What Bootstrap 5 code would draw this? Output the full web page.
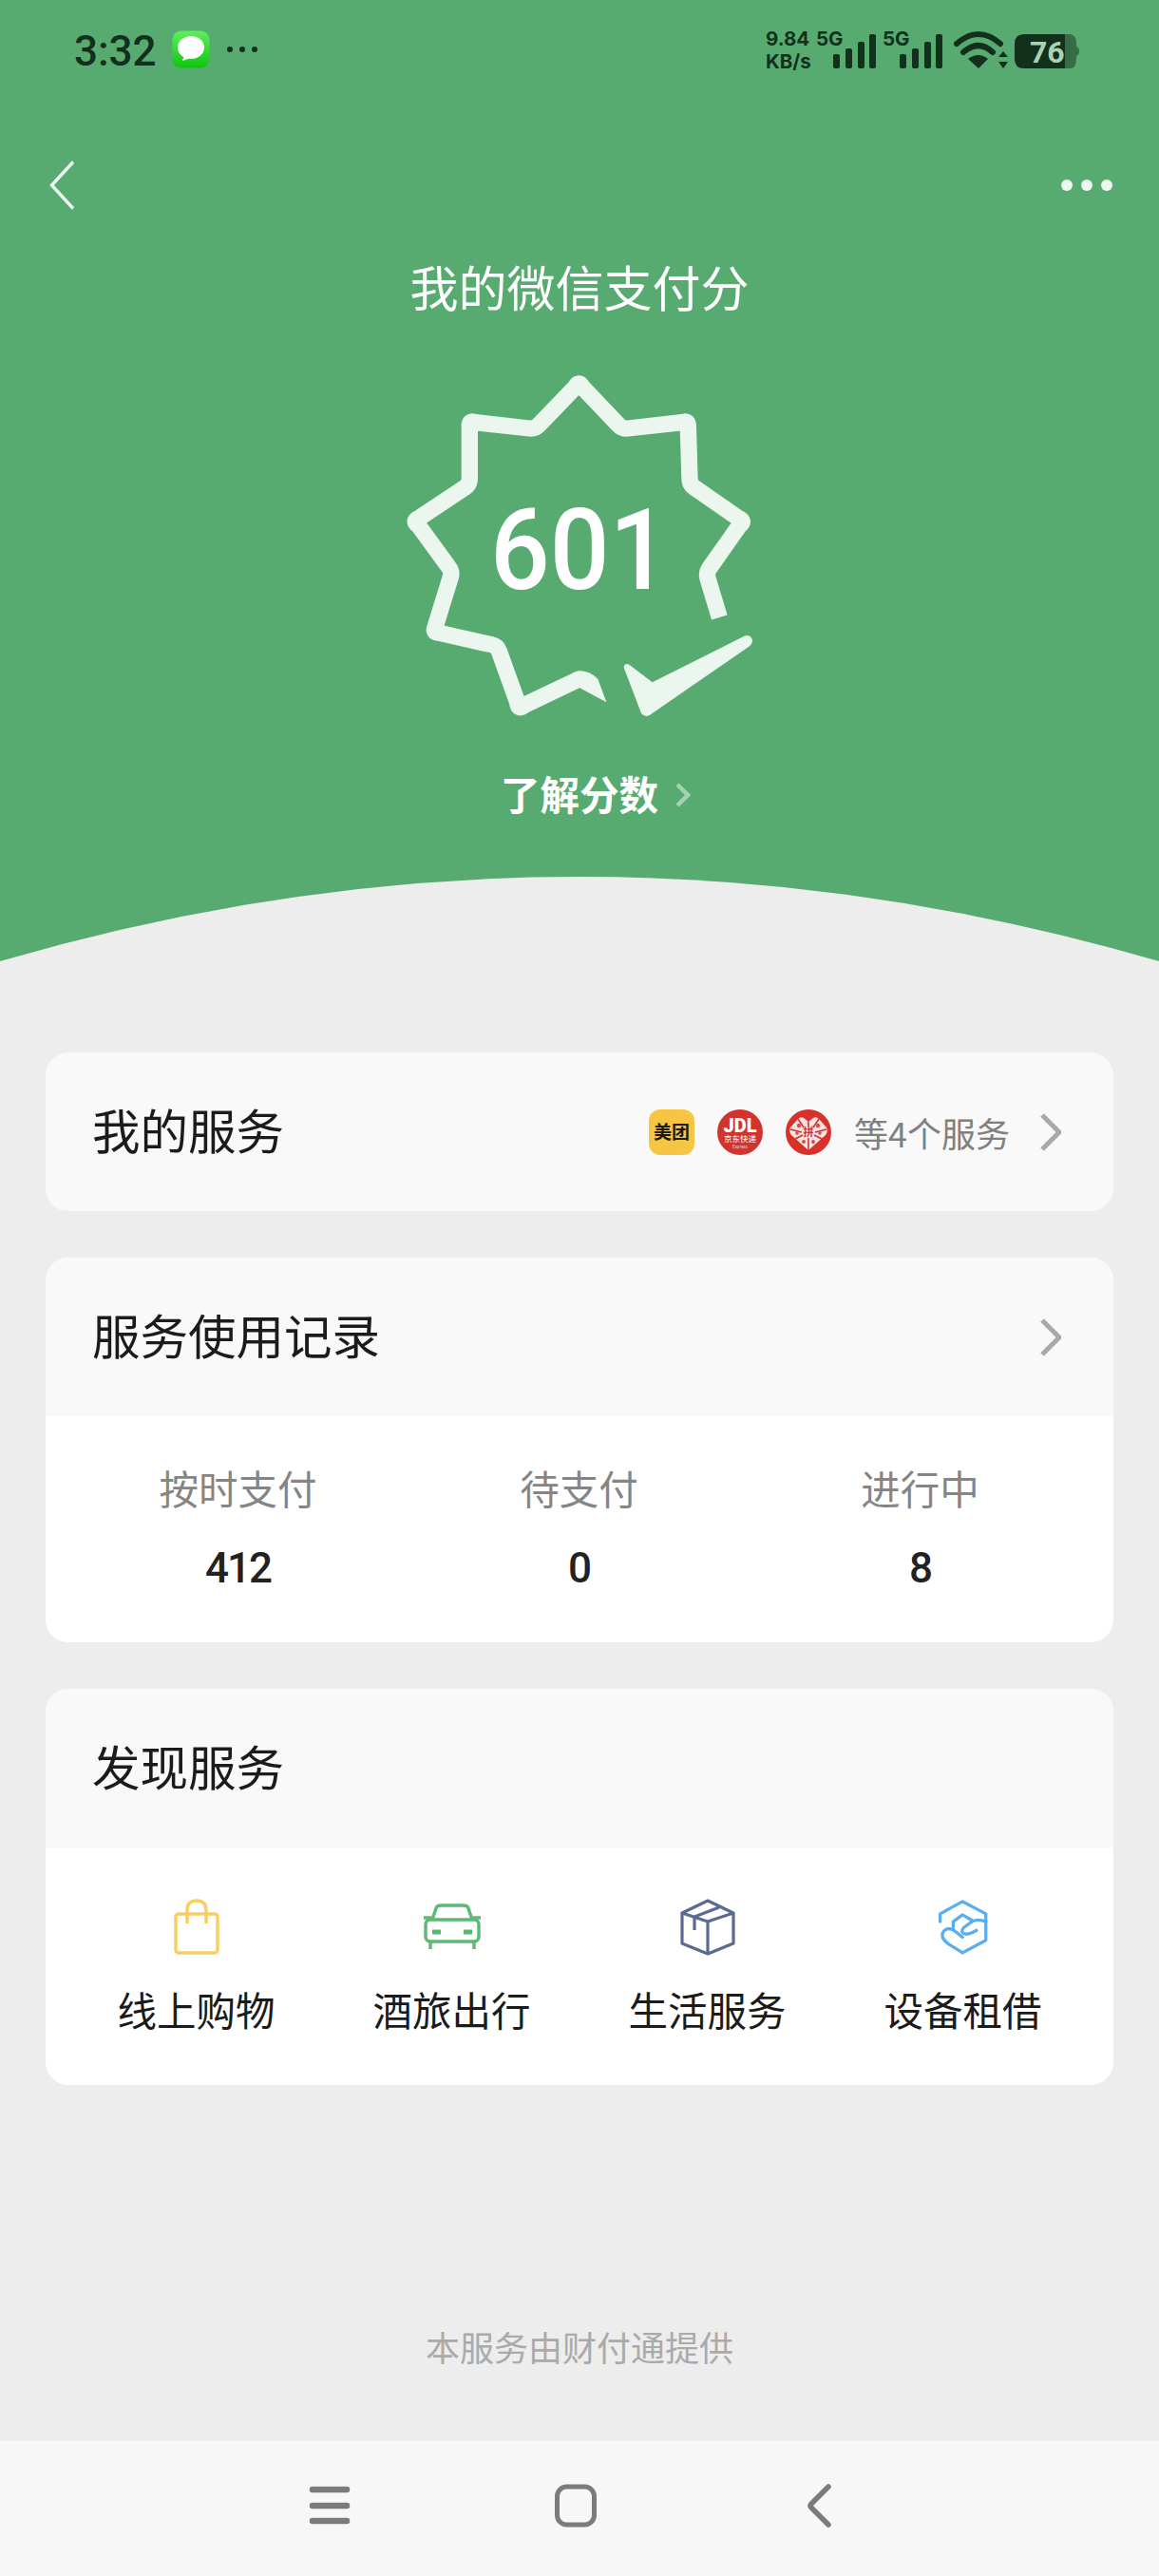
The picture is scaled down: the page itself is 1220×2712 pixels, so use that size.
<!DOCTYPE html>
<html lang="zh-CN">
  <head>
    <meta charset="UTF-8" />
    <meta name="viewport" content="width=device-width, initial-scale=1" />
    <title>我的微信支付分</title>
    <link href="https://cdn.jsdelivr.net/npm/bootstrap@5.3.0/dist/css/bootstrap.min.css" rel="stylesheet" />
    <style>
      body {
        font-family: "Noto Sans CJK SC", "Noto Sans", sans-serif;
        background: #ededed;
        color: #1b1b1b;
        width: 1220px;
        height: 2712px;
      }
      .hero { background: #58ab70; color: #fff; }
      .status-row { height: 165px; padding: 32px 82px 0 78px; color: #12301c; }
      .clock { font-family: Roboto, sans-serif; font-size: 44px; font-weight: 500; line-height: 44px; }
      .status-icons { margin-top: -12px; }
      .top-row { height: 60px; padding: 0 48px 0 52px; }
      .hero-title { font-size: 51px; line-height: 70px; margin-top: 41px; text-align: center; }
      .badge-art { display: block; margin: 34px auto 0; }
      .score-num { font-family: Roboto, sans-serif; font-weight: 500; fill: #fff; }
      .score-link { font-size: 41.5px; font-weight: 700; line-height: 56px; margin-top: 17px; height: 116px; }
      .score-chev { margin: 16px -34px 0 18px; }
      .hero-curve { display: block; }
      .page-main { padding: 96px 48px 0; }
      .svc-card { border: 0; border-radius: 24px; overflow: hidden; margin-bottom: 49px; background: #fff; }
      .svc-head { background: #f9f9f9; height: 167px; padding: 0 55px 0 49px; font-size: 50.5px; }
      .head-text { margin-bottom: 5px; }
      .svc-side { font-size: 36px; color: #808080; }
      .logo-gap { margin-right: 24px; }
      .chev-gap { margin-left: 32px; }
      .stat-row { padding: 0 23px; height: 238px; }
      .stat-col { width: 359px; text-align: center; }
      .stat-label { font-size: 41.5px; color: #858585; line-height: 56px; margin-top: 47px; }
      .stat-num { font-family: Roboto, sans-serif; font-size: 44px; font-weight: 500; letter-spacing: -2px; line-height: 56px; margin-top: 29px; color: #222; }
      .find-row { padding: 0 24px; height: 250px; }
      .find-col { width: 269px; text-align: center; font-size: 41.5px; line-height: 56px; }
      .find-icon { height: 60px; margin-top: 49px; margin-bottom: 33px; }
      .foot-note { font-size: 36px; color: #aaaaaa; text-align: center; line-height: 50px; margin-top: 250px; }
      .nav-strip { background: #f7f7f7; height: 142px; padding: 0 20px 6px 0; }
    </style>
  </head>
  <body class="d-flex flex-column">
    <div class="hero">
      <div class="status-row d-flex justify-content-between">
        <div class="d-flex align-items-start">
          <span class="clock">3:32</span>
          <svg class="ms-3" width="40" height="40" viewBox="0 0 40 40">
            <defs>
              <linearGradient id="msgG" x1="0" y1="0" x2="0" y2="1">
                <stop offset="0" stop-color="#5ff05c" />
                <stop offset="1" stop-color="#10c410" />
              </linearGradient>
            </defs>
            <rect width="39" height="39" x="0.5" y="0.5" rx="9" fill="url(#msgG)" />
            <ellipse cx="20" cy="18" rx="14" ry="12" fill="#fff" />
            <path d="M13 26 L11 32 L20 29 Z" fill="#fff" />
          </svg>
          <svg class="ms-3" width="36" height="40" viewBox="0 0 36 40">
            <circle cx="5" cy="20" r="3" fill="#12301c" />
            <circle cx="18" cy="20" r="3" fill="#12301c" />
            <circle cx="31" cy="20" r="3" fill="#12301c" />
          </svg>
        </div>
        <svg width="332" height="60" viewBox="0 -12 332 60" class="status-icons">
          <g fill="#12301c" font-family="Inter, sans-serif" font-weight="700" font-size="20.5">
            <text x="0" y="16">9.84</text>
            <text x="0" y="40">KB/s</text>
            <text x="53" y="16">5G</text>
            <text x="123" y="16">5G</text>
            <rect x="71" y="25" width="7" height="15" rx="2" />
            <rect x="84" y="19" width="7" height="21" rx="2" />
            <rect x="97" y="12" width="7" height="28" rx="2" />
            <rect x="109" y="4" width="7" height="36" rx="2" />
            <rect x="141" y="25" width="7" height="15" rx="2" />
            <rect x="154" y="19" width="7" height="21" rx="2" />
            <rect x="167" y="12" width="7" height="28" rx="2" />
            <rect x="179" y="4" width="7" height="36" rx="2" />
            <path d="M201 14 Q224 -6 247 14" fill="none" stroke="#12301c" stroke-width="6" stroke-linecap="round" />
            <path d="M208 23 Q224 9 239 23" fill="none" stroke="#12301c" stroke-width="6" stroke-linecap="round" />
            <path d="M213 30 Q224 22 234 30 L224 40 Z" />
            <path d="M245 28 L250 22 L255 28 Z M245 33 L255 33 L250 40 Z" />
            <path d="M262 14 Q262 4 272 4 H315 V40 H272 Q262 40 262 30 Z" />
            <path d="M315 4 H320 Q327 4 327 14 V17 Q330 18 330 22 Q330 26 327 27 V30 Q327 40 320 40 H315 Z" opacity="0.5" />
            <text x="278" y="34" font-family="Roboto, sans-serif" font-size="32" font-weight="700" fill="#a8d4b4">76</text>
          </g>
        </svg>
      </div>
      <div class="top-row d-flex justify-content-between align-items-center">
        <svg width="26" height="52" viewBox="0 0 26 52"><path d="M25 1.5 L2.5 26 L25 50.5" fill="none" stroke="#eef7f0" stroke-width="3.4" /></svg>
        <svg width="56" height="14" viewBox="0 0 56 14" fill="#eef7f0">
          <circle cx="7" cy="7" r="6" /><circle cx="28" cy="7" r="6" /><circle cx="49" cy="7" r="6" />
        </svg>
      </div>
      <div class="hero-title">我的微信支付分</div>
      <svg class="badge-art" width="420" height="420" viewBox="0 0 1260 1260">
        <path d="M1072 840 L1035 717 Q1030 700 1040 685 L1135 550 Q1155 535 1130 525 L993 430 Q978 420 978 402 L973 240 Q975 215 954 224 L783 243 Q765 245 753 232 L640 113 Q628 90 616 113 L502 232 Q490 245 472 243 L301 224 Q280 215 283 240 L283 402 Q283 420 268 430 L125 525 Q100 535 121 549 L217 681 Q228 695 223 712 L175 868 Q165 890 188 889 L352 926 Q370 930 376 947 L434 1108 Q436 1135 456 1117 L628 1035"
          fill="none" stroke="#ebf6ee" stroke-width="52" stroke-linejoin="round" />
        <circle cx="628" cy="1035" r="26" fill="#ebf6ee" />
        <path d="M628 1009 Q660 1008 688 1034 L715 1108 L628 1061 Z" fill="#ebf6ee" />
        <path d="M770 998 Q772 982 788 990 L860 1045 L1150 899 Q1170 892 1176 912 Q1176 925 1165 932 L850 1150 Q835 1156 825 1143 Z" fill="#ebf6ee" />
        <text class="score-num" x="348" y="750" font-size="358" textLength="565" lengthAdjust="spacingAndGlyphs">601</text>
      </svg>
      <div class="score-link d-flex justify-content-center align-items-start">
        <span>了解分数</span>
        <svg class="score-chev" width="16" height="28" viewBox="0 0 16 28"><path d="M2 3 L13 14 L2 25" fill="none" stroke="#a4d3b1" stroke-width="4.5" /></svg>
      </div>
      <svg class="hero-curve" width="1220" height="89" viewBox="0 0 1220 89">
        <path d="M0 89 Q610 -89 1220 89 Z" fill="#ededed" />
      </svg>
    </div>

    <div class="page-main flex-grow-1">
      <div class="card svc-card">
        <div class="svc-head d-flex justify-content-between align-items-center">
          <span class="head-text">我的服务</span>
          <div class="svc-side d-flex align-items-center">
            <svg class="logo-gap" width="48" height="48" viewBox="0 0 48 48">
              <rect width="48" height="48" rx="12" fill="#f6c543" />
              <text x="24" y="31" text-anchor="middle" font-size="19" font-weight="700" fill="#201a08">美团</text>
            </svg>
            <svg class="logo-gap" width="48" height="48" viewBox="0 0 48 48">
              <circle cx="24" cy="24" r="24" fill="#d0342c" />
              <text x="24" y="24" text-anchor="middle" font-family="Roboto, sans-serif" font-size="20" font-weight="900" fill="#fff">JDL</text>
              <text x="24" y="34" text-anchor="middle" font-size="8.5" fill="#fff">京东快递</text>
              <text x="24" y="41" text-anchor="middle" font-family="Roboto, sans-serif" font-size="4.5" fill="#f3c8c5">Express</text>
            </svg>
            <svg class="logo-gap" width="48" height="48" viewBox="0 0 48 48">
              <circle cx="24" cy="24" r="24" fill="#d8302a" />
              <path d="M24 43 L6 27 Q3 23 5 19 L13 10 Q16 7 19 9 L24 13 L29 9 Q32 7 35 10 L43 19 Q45 23 42 27 Z" fill="#f6e2e0" />
              <path d="M24 13 V18 M24 30 V43 M5 21 L17 24 M43 21 L31 24 M13 10 L19 19 M35 10 L29 19 M10 31 L18 27 M38 31 L30 27" stroke="#d8302a" stroke-width="1.6" fill="none" />
              <g fill="#c9534e">
                <circle cx="14" cy="17" r="2.2" /><circle cx="34" cy="17" r="2.2" />
                <circle cx="12" cy="25" r="1.8" /><circle cx="36" cy="25" r="1.8" />
                <circle cx="19" cy="34" r="2" /><circle cx="29" cy="34" r="2" />
              </g>
              <text x="24" y="28" text-anchor="middle" font-size="11" font-weight="700" fill="#c9302a">拼</text>
            </svg>
            <span>等4个服务</span>
            <svg class="chev-gap" width="22" height="40" viewBox="0 0 22 40"><path d="M2 2 L20 20 L2 38" fill="none" stroke="#a9a9a9" stroke-width="5" /></svg>
          </div>
        </div>
      </div>

      <div class="card svc-card">
        <div class="svc-head d-flex justify-content-between align-items-center">
          <span class="head-text">服务使用记录</span>
          <svg width="22" height="40" viewBox="0 0 22 40"><path d="M2 2 L20 20 L2 38" fill="none" stroke="#a9a9a9" stroke-width="5" /></svg>
        </div>
        <div class="stat-row d-flex">
          <div class="stat-col"><div class="stat-label">按时支付</div><div class="stat-num">412</div></div>
          <div class="stat-col"><div class="stat-label">待支付</div><div class="stat-num">0</div></div>
          <div class="stat-col"><div class="stat-label">进行中</div><div class="stat-num">8</div></div>
        </div>
      </div>

      <div class="card svc-card">
        <div class="svc-head d-flex align-items-center"><span class="head-text">发现服务</span></div>
        <div class="find-row d-flex">
          <div class="find-col">
            <div class="find-icon">
              <svg width="48" height="60" viewBox="0 0 48 60" fill="none" stroke="#f5cf60" stroke-width="3.4">
                <rect x="2" y="16" width="44" height="41" rx="3" />
                <path d="M14 26 V12 Q14 2 24 2 Q34 2 34 12 V26" />
              </svg>
            </div>
            线上购物
          </div>
          <div class="find-col">
            <div class="find-icon">
              <svg width="62" height="60" viewBox="0 0 62 60" fill="none" stroke="#5cb874" stroke-width="3.4">
                <path d="M10 22 L14 10 Q15 7 19 7 H43 Q47 7 48 10 L52 22" />
                <rect x="3" y="22" width="56" height="23" rx="5" />
                <path d="M1 20 H9 M53 20 H61 M8 45 V53 M54 45 V53" />
                <path d="M10 35 H19 M43 35 H52" stroke-width="5" />
              </svg>
            </div>
            酒旅出行
          </div>
          <div class="find-col">
            <div class="find-icon">
              <svg width="60" height="60" viewBox="0 0 60 60" fill="none" stroke="#5b6a93" stroke-width="3.2" stroke-linejoin="round">
                <path d="M30 2 L57 15 V47 L30 58 L3 47 V15 Z" />
                <path d="M3 15 L30 24 L57 15 M30 24 V58" />
                <path d="M42 9 L16 19 V33" />
              </svg>
            </div>
            生活服务
          </div>
          <div class="find-col">
            <div class="find-icon">
              <svg width="54" height="60" viewBox="50 28 165 180" fill="none" stroke="#5aaeee" stroke-width="10" stroke-linejoin="round" stroke-linecap="round">
                <path d="M58 100 V75 L130 35 L205 75 V160 L130 200 L85 172 Q55 150 70 130 Q85 115 105 130 L130 150" />
                <path d="M100 125 V100 L130 78 L160 95" />
                <path d="M205 100 Q180 90 160 100 L135 118 Q120 135 140 140 Q155 140 175 128" />
              </svg>
            </div>
            设备租借
          </div>
        </div>
      </div>

      <div class="foot-note">本服务由财付通提供</div>
    </div>

    <div class="nav-strip d-flex flex-shrink-0 justify-content-center align-items-center">
      <svg width="560" height="46" viewBox="0 0 560 46" fill="none" stroke="#7b7b7b" stroke-linecap="round">
        <path d="M9 6 H45 M9 23 H45 M9 39 H45" stroke-width="6.5" />
        <rect x="266.5" y="3" width="39" height="40" rx="10" stroke-width="5" />
        <path d="M552 3 L534 21 Q532 23 534 25 L552 43" stroke-width="5.5" />
      </svg>
    </div>
  </body>
</html>
